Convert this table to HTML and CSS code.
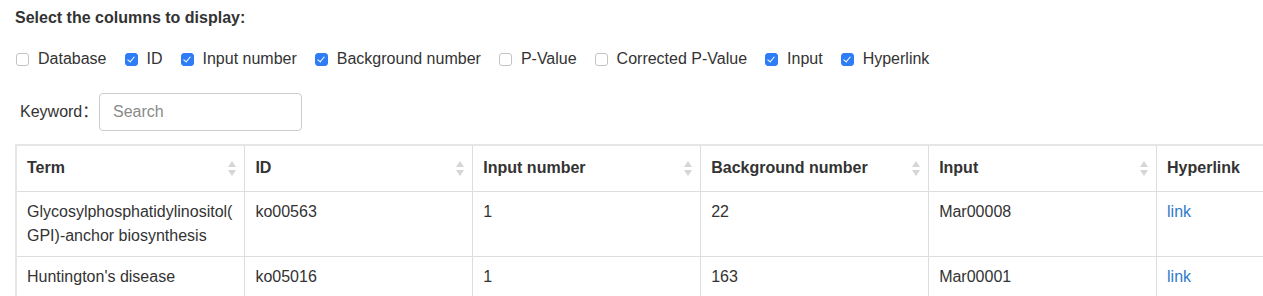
FILE: index.html
```html
<!DOCTYPE html>
<html lang="en">
<head>
<meta charset="utf-8">
<title>Columns</title>
<link rel="stylesheet" href="styles.css">
</head>
<body>
<div class="page">
  <h4 class="title">Select the columns to display:</h4>
  <div class="col-picker">
    <label class="opt"><input type="checkbox"><span>Database</span></label>
    <label class="opt"><input type="checkbox" checked><span>ID</span></label>
    <label class="opt"><input type="checkbox" checked><span>Input number</span></label>
    <label class="opt"><input type="checkbox" checked><span>Background number</span></label>
    <label class="opt"><input type="checkbox"><span>P-Value</span></label>
    <label class="opt"><input type="checkbox"><span>Corrected P-Value</span></label>
    <label class="opt"><input type="checkbox" checked><span>Input</span></label>
    <label class="opt"><input type="checkbox" checked><span>Hyperlink</span></label>
  </div>
  <div class="search-row">
    <label class="kw-label" for="kw">Keyword：</label>
    <input id="kw" class="kw-input" type="text" placeholder="Search">
  </div>
  <div class="table-wrap">
    <table class="data">
      <thead>
        <tr>
          <th><span class="th-inner">Term</span><svg class="sort" viewBox="0 0 8 15"><path d="M4 0 L8 6 L0 6 Z M0 9 L8 9 L4 15 Z"/></svg></th>
          <th><span class="th-inner">ID</span><svg class="sort" viewBox="0 0 8 15"><path d="M4 0 L8 6 L0 6 Z M0 9 L8 9 L4 15 Z"/></svg></th>
          <th><span class="th-inner">Input number</span><svg class="sort" viewBox="0 0 8 15"><path d="M4 0 L8 6 L0 6 Z M0 9 L8 9 L4 15 Z"/></svg></th>
          <th><span class="th-inner">Background number</span><svg class="sort" viewBox="0 0 8 15"><path d="M4 0 L8 6 L0 6 Z M0 9 L8 9 L4 15 Z"/></svg></th>
          <th><span class="th-inner">Input</span><svg class="sort" viewBox="0 0 8 15"><path d="M4 0 L8 6 L0 6 Z M0 9 L8 9 L4 15 Z"/></svg></th>
          <th><span class="th-inner">Hyperlink</span></th>
        </tr>
      </thead>
      <tbody>
        <tr>
          <td>Glycosylphosphatidylinositol(GPI)-anchor biosynthesis</td>
          <td>ko00563</td>
          <td>1</td>
          <td>22</td>
          <td>Mar00008</td>
          <td><a href="#">link</a></td>
        </tr>
        <tr>
          <td>Huntington's disease</td>
          <td>ko05016</td>
          <td>1</td>
          <td>163</td>
          <td>Mar00001</td>
          <td><a href="#">link</a></td>
        </tr>
      </tbody>
    </table>
  </div>
</div>
</body>
</html>
```

FILE: styles.css
```css
html, body {
  margin: 0;
  padding: 0;
  background: #fff;
  overflow: hidden;
}
body {
  font-family: "Liberation Sans", Arial, "Noto Sans CJK SC", sans-serif;
  font-size: 16px;
  color: #333;
}
.page {
  padding: 8px 0 0 15px;
}
.title {
  margin: 0;
  font-size: 16px;
  line-height: 20px;
  font-weight: bold;
  color: #333;
}
.col-picker {
  display: flex;
  align-items: center;
  gap: 18px;
  margin-top: 19px;
  height: 24px;
  padding-left: 1px;
}
.opt {
  display: flex;
  align-items: center;
  gap: 9px;
  line-height: 24px;
  white-space: nowrap;
}
.opt input {
  appearance: none;
  -webkit-appearance: none;
  margin: 0;
  width: 13px;
  height: 13px;
  border: 1px solid #c4c4c4;
  border-radius: 3px;
  background: #fff;
  position: relative;
  flex: none;
}
.opt input:checked {
  background: #2e7cf6;
  border-color: #2e7cf6;
}
.opt input:checked::after {
  content: "";
  position: absolute;
  left: 3px;
  top: 1px;
  width: 3px;
  height: 6px;
  border: solid #fff;
  border-width: 0 1.6px 1.6px 0;
  transform: rotate(40deg);
}
.search-row {
  display: flex;
  align-items: center;
  margin-top: 22px;
  padding-left: 5px;
}
.kw-label {
  width: 79px;
  line-height: 24px;
}
.kw-input {
  box-sizing: border-box;
  width: 203px;
  height: 38px;
  border: 1px solid #cccccc;
  border-radius: 4px;
  padding: 0 13px;
  font-family: inherit;
  font-size: 16px;
  color: #333;
  outline: none;
}
.kw-input::placeholder {
  color: #8a8a8a;
}
.table-wrap {
  margin-top: 13px;
  overflow: hidden;
  border-top: 2px solid #e6e6e6;
  border-left: 2px solid #e6e6e6;
}
.data {
  border-collapse: collapse;
  table-layout: fixed;
  width: 1368px;
}
.data th, .data td {
  border: 1px solid #dddddd;
  text-align: left;
  vertical-align: top;
  line-height: 24px;
  overflow-wrap: break-word;
  word-wrap: break-word;
}
.data tr:first-child th {
  border-top: 0;
}
.data th:first-child, .data td:first-child {
  border-left: 0;
}
.data th {
  position: relative;
  font-weight: bold;
  padding: 10px 10px 11px 10px;
}
.data td {
  padding: 8px 10px 8px 10px;
}
.sort {
  position: absolute;
  right: 8px;
  top: 50%;
  width: 8px;
  height: 15px;
  margin-top: -8px;
  fill: #d6d6d6;
}
.data a {
  color: #2f7ccb;
  text-decoration: none;
}
```
